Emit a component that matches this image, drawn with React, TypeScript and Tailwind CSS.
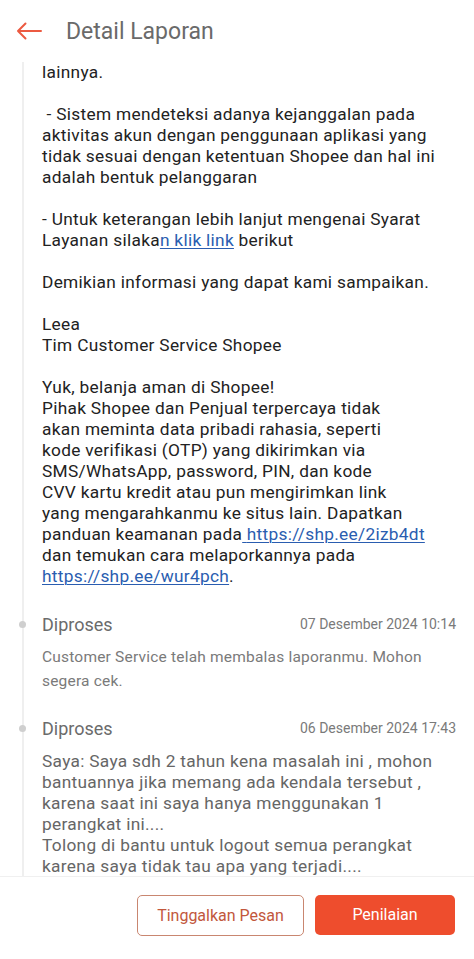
import React from 'react';

const Link: React.FC<{ children: React.ReactNode }> = ({ children }) => (
  <span className="text-[#2a5db0] underline underline-offset-2 decoration-1">{children}</span>
);

// isi pesan CS, baris per baris supaya wrap-nya sama
const replyLines: React.ReactNode[] = [
  'lainnya.',
  '',
  '\u00a0- Sistem mendeteksi adanya kejanggalan pada',
  'aktivitas akun dengan penggunaan aplikasi yang',
  'tidak sesuai dengan ketentuan Shopee dan hal ini',
  'adalah bentuk pelanggaran',
  '',
  '- Untuk keterangan lebih lanjut mengenai Syarat',
  <>Layanan silaka<Link>n klik link</Link> berikut</>,
  '',
  'Demikian informasi yang dapat kami sampaikan.',
  '',
  'Leea',
  'Tim Customer Service Shopee',
  '',
  'Yuk, belanja aman di Shopee!',
  'Pihak Shopee dan Penjual terpercaya tidak',
  'akan meminta data pribadi rahasia, seperti',
  'kode verifikasi (OTP) yang dikirimkan via',
  'SMS/WhatsApp, password, PIN, dan kode',
  'CVV kartu kredit atau pun mengirimkan link',
  'yang mengarahkanmu ke situs lain. Dapatkan',
  <>panduan keamanan pada<Link>{'\u00a0'}https://shp.ee/2izb4dt</Link></>,
  'dan temukan cara melaporkannya pada',
  <><Link>https://shp.ee/wur4pch</Link>.</>,
];

const userLines = [
  'Saya: Saya sdh 2 tahun kena masalah ini , mohon',
  'bantuannya jika memang ada kendala tersebut ,',
  'karena saat ini saya hanya menggunakan 1',
  'perangkat ini....',
  'Tolong di bantu untuk logout semua perangkat',
  'karena saya tidak tau apa yang terjadi....',
];

const Dot = () => (
  <div className="absolute left-[-23px] top-[9px] w-[7px] h-[7px] rounded-full bg-[#cfcfcf]" />
);

const StatusHeader: React.FC<{ date: string }> = ({ date }) => (
  <div className="relative flex items-center justify-between h-[24px]">
    <Dot />
    <span className="text-[18px] text-[#6b6b6b]">Diproses</span>
    <span className="text-[14px] text-[#7a7a7a]">{date}</span>
  </div>
);

export default function App() {
  return (
    <div
      className="w-[474px] h-[959px] flex flex-col bg-white overflow-hidden"
      style={{ fontFamily: 'Roboto, "Noto Sans", sans-serif' }}
    >
      {/* Header */}
      <div className="h-[62px] flex items-center pl-[16px] shrink-0">
        <svg width="26" height="18" viewBox="0 0 26 18" fill="none" stroke="#ec5a41" strokeWidth="2" strokeLinecap="round" strokeLinejoin="round">
          <path d="M25 9H2M9.5 1.5L2 9l7.5 7.5" />
        </svg>
        <span className="ml-[24px] text-[23px] text-[#6a6a6a] leading-none">Detail Laporan</span>
      </div>

      {/* Timeline */}
      <div className="flex-1 overflow-hidden">
        <div className="ml-[22px] border-l-[2px] border-[#efefef] pl-[18px] pr-[18px] min-h-full">
          <div className="text-[17.3px] tracking-[0.3px] leading-[21px] text-[#222222] whitespace-pre">
            {replyLines.map((l, i) => (
              <div key={i} className="h-[21px]">{l}</div>
            ))}
          </div>

          <div className="h-[24px]" />

          <div className="pt-[1px]">
            <StatusHeader date="07 Desember 2024 10:14" />
            <div className="mt-[9px] text-[15.5px] tracking-[0.2px] leading-[24px] text-[#7a7a7a] whitespace-nowrap">
              <div>Customer Service telah membalas laporanmu. Mohon</div>
              <div>segera cek.</div>
            </div>
          </div>

          <div className="mt-[23px]">
            <StatusHeader date="06 Desember 2024 17:43" />
            <div className="mt-[11px] text-[17.3px] tracking-[0.3px] leading-[21px] text-[#666666] whitespace-nowrap">
              {userLines.map((l, i) => (
                <div key={i}>{l}</div>
              ))}
            </div>
          </div>
        </div>
      </div>

      {/* Footer */}
      <div className="h-[83px] shrink-0 border-t border-[#f0f0f0] bg-white flex justify-end items-start pt-[18px] pr-[19px] gap-[11px]">
        <button className="w-[167px] h-[41px] rounded-[5px] border border-[#c98670] text-[#c2573c] text-[16px]">
          Tinggalkan Pesan
        </button>
        <button className="w-[140px] h-[40px] rounded-[5px] bg-[#ee4d2d] text-white text-[16px]">
          Penilaian
        </button>
      </div>
    </div>
  );
}
